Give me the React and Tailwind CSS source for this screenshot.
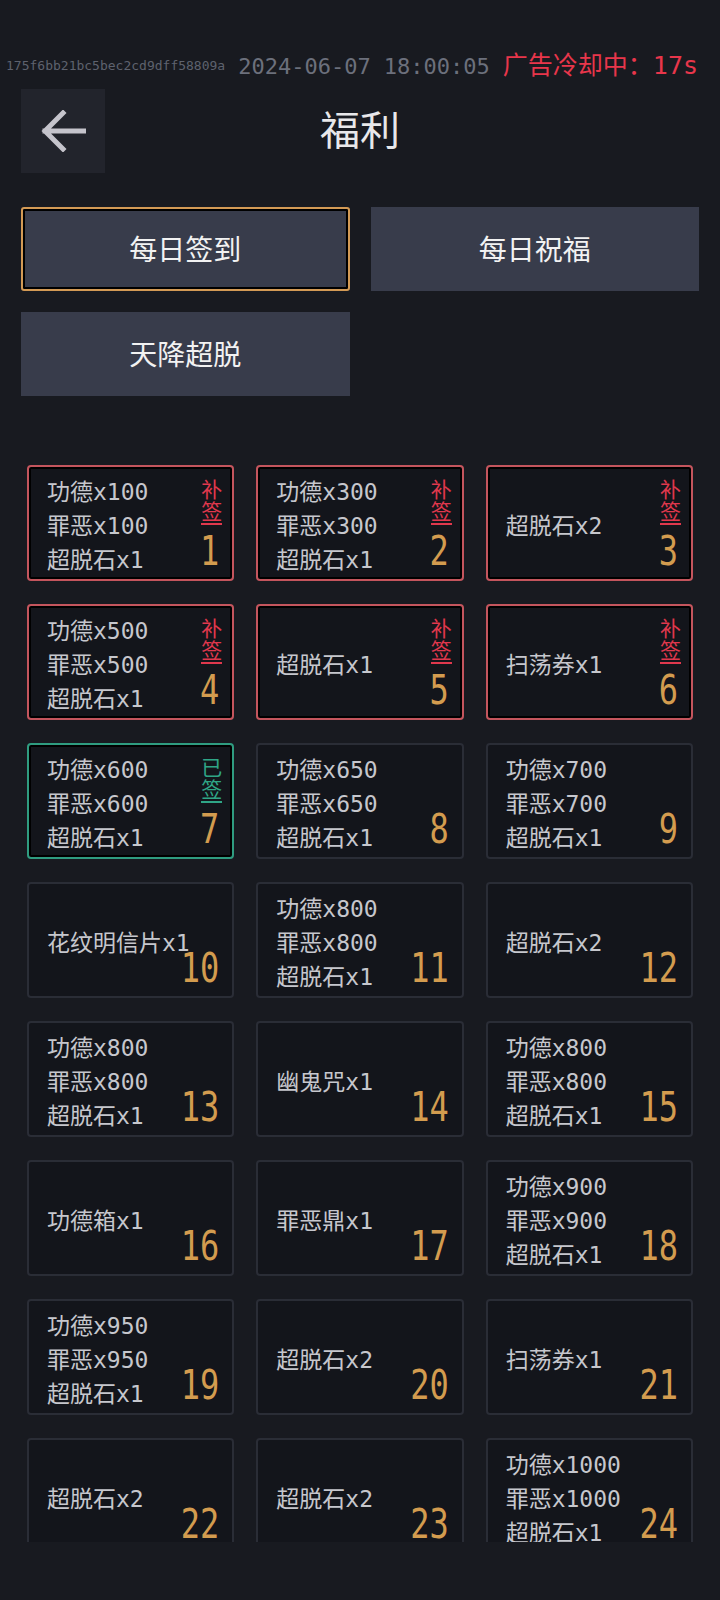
import React from "react";

const rewards = [
  { items: ["功德x100", "罪恶x100", "超脱石x1"], state: "missed" },
  { items: ["功德x300", "罪恶x300", "超脱石x1"], state: "missed" },
  { items: ["超脱石x2"], state: "missed" },
  { items: ["功德x500", "罪恶x500", "超脱石x1"], state: "missed" },
  { items: ["超脱石x1"], state: "missed" },
  { items: ["扫荡券x1"], state: "missed" },
  { items: ["功德x600", "罪恶x600", "超脱石x1"], state: "done" },
  { items: ["功德x650", "罪恶x650", "超脱石x1"] },
  { items: ["功德x700", "罪恶x700", "超脱石x1"] },
  { items: ["花纹明信片x1"] },
  { items: ["功德x800", "罪恶x800", "超脱石x1"] },
  { items: ["超脱石x2"] },
  { items: ["功德x800", "罪恶x800", "超脱石x1"] },
  { items: ["幽鬼咒x1"] },
  { items: ["功德x800", "罪恶x800", "超脱石x1"] },
  { items: ["功德箱x1"] },
  { items: ["罪恶鼎x1"] },
  { items: ["功德x900", "罪恶x900", "超脱石x1"] },
  { items: ["功德x950", "罪恶x950", "超脱石x1"] },
  { items: ["超脱石x2"] },
  { items: ["扫荡券x1"] },
  { items: ["超脱石x2"] },
  { items: ["超脱石x2"] },
  { items: ["功德x1000", "罪恶x1000", "超脱石x1"] },
];

const font = "font-['DejaVu_Sans_Mono','Noto_Sans_CJK_SC',monospace]";

function DayCard({ day, items, state }) {
  let border = "border-[#2a2d36]";
  if (state === "missed") border = "border-[#c4555d] shadow-[inset_0_0_0_2px_#000]";
  if (state === "done") border = "border-[#2f9c80] shadow-[inset_0_0_0_2px_#000]";

  return (
    <div className={"relative h-[116px] rounded-[4px] border-2 bg-[#13151b] flex items-center pl-[18px] pt-[5px] " + border}>
      <div className="flex flex-col text-[23px] leading-[34px] text-[#c6c7cd]">
        {items.map((t, i) => (
          <span key={i} className="whitespace-nowrap">{t}</span>
        ))}
      </div>

      {state === "missed" && (
        <div className="absolute right-[10px] top-[12px] flex flex-col text-[21px] leading-[22px] text-[#e0384d] border-b-2 border-[#e0384d]">
          <span>补</span>
          <span>签</span>
        </div>
      )}
      {state === "done" && (
        <div className="absolute right-[10px] top-[12px] flex flex-col text-[21px] leading-[22px] text-[#2fa586] border-b-2 border-[#2fa586]">
          <span>已</span>
          <span>签</span>
        </div>
      )}

      <span className="absolute right-[13px] bottom-[9px] text-[32px] leading-[30px] text-[#d39c4f] scale-y-[1.3] origin-bottom">
        {day}
      </span>
    </div>
  );
}

export default function App() {
  return (
    <div className={"w-[720px] h-[1600px] bg-[#181a20] overflow-hidden " + font}>
      {/* top status line */}
      <div className="flex justify-end items-center gap-[13px] pt-[52px] pr-[22px] h-[80px] whitespace-nowrap overflow-hidden">
        <span className="text-[13px] text-[#5e626e]">175f6bb21bc5bec2cd9dff58809a</span>
        <span className="text-[22px] text-[#6c707c]">2024-06-07 18:00:05</span>
        <span className="text-[25px] text-[#e8364b]">广告冷却中：17s</span>
      </div>

      {/* header */}
      <div className="flex items-center mt-[9px] px-[21px]">
        <button className="w-[84px] h-[84px] bg-[#22242c] flex items-center justify-center">
          <svg width="46" height="42" viewBox="0 0 46 42" fill="none">
            <path d="M44 21H5M23 3L5 21L23 39" stroke="#c5c4cc" strokeWidth="5" strokeLinecap="square" />
          </svg>
        </button>
        <h1 className="flex-1 text-center text-[40px] text-[#e8e8ea]">福利</h1>
        <div className="w-[84px]" />
      </div>

      {/* tabs */}
      <div className="grid grid-cols-2 gap-[21px] px-[21px] mt-[34px]">
        <button className="h-[84px] bg-[#383c4b] border-2 border-[#d39a55] shadow-[inset_0_0_0_2px_#000] rounded-[3px] text-[28px] text-[#f2f2f2] pt-[3px]">
          每日签到
        </button>
        <button className="h-[84px] bg-[#383c4b] text-[28px] text-[#f2f2f2] pt-[3px]">每日祝福</button>
        <button className="h-[84px] bg-[#383c4b] text-[28px] text-[#f2f2f2] pt-[3px]">天降超脱</button>
      </div>

      {/* sign-in grid */}
      <div className="h-[1146px] overflow-hidden pt-[69px] px-[27px]">
        <div className="grid grid-cols-3 gap-x-[22px] gap-y-[23px]">
          {rewards.map((r, i) => (
            <DayCard key={i} day={i + 1} items={r.items} state={r.state} />
          ))}
        </div>
      </div>
    </div>
  );
}
